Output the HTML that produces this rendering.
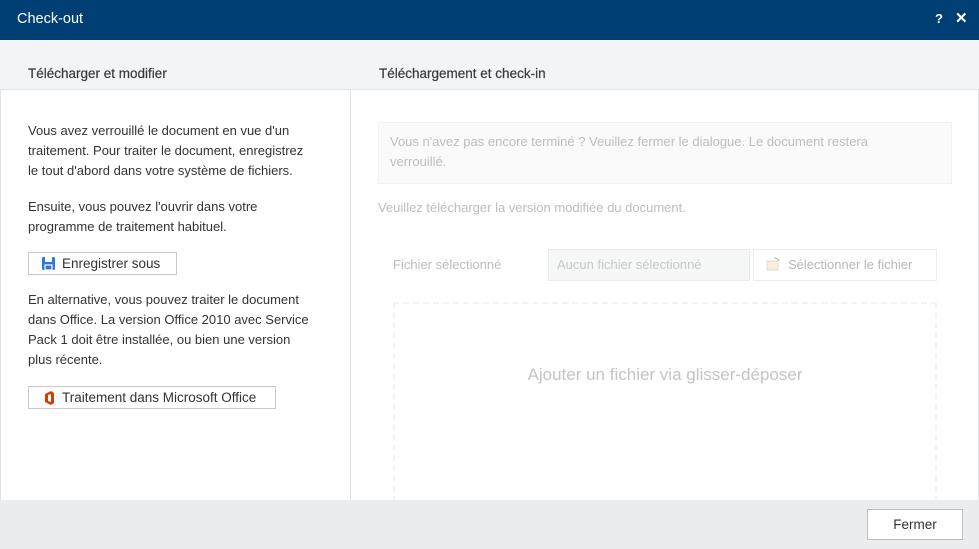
<!DOCTYPE html>
<html><head><meta charset="utf-8"><style>
*{box-sizing:border-box;margin:0;padding:0}
body{width:979px;height:549px;overflow:hidden;font-family:"Liberation Sans",sans-serif;font-size:13px;color:#333;background:#fff;position:relative}
.a{position:absolute}
.title{left:0;top:0;width:979px;height:40px;background:#003f73;color:#fff}
.hdr{left:0;top:40px;width:979px;height:50px;background:#f3f4f6;border-bottom:1px solid #e2e3e5}
.h{font-size:13.5px;color:#3a3a3a;top:66px;-webkit-text-stroke:0.2px #3a3a3a}
p{position:absolute;left:28px;line-height:20px;width:292px}
.btn{position:absolute;border:1px solid #c9c9c9;background:#fff;height:23px;font-size:13.5px;line-height:21px;color:#333}
.g{color:#bdbdbd}
</style></head><body>
<div class="a title"><span class="a" style="left:17px;top:11px;font-size:14.5px">Check-out</span>
<span class="a" style="left:935px;top:11px;font-weight:bold;font-size:13px">?</span>
<span class="a" style="left:955px;top:9px;font-weight:bold;font-size:15px">✕</span></div>
<div class="a hdr"></div>
<div class="a h" style="left:28px">Télécharger et modifier</div>
<div class="a h" style="left:379px">Téléchargement et check-in</div>
<div class="a" style="left:350px;top:90px;width:1px;height:410px;background:#e2e3e5"></div>
<div class="a" style="left:0;top:90px;width:1px;height:410px;background:#e2e3e5"></div>
<div class="a" style="left:978px;top:90px;width:1px;height:410px;background:#e2e3e5"></div>
<p style="top:121px;width:284px">Vous avez verrouillé le document en vue d'un traitement. Pour traiter le document, enregistrez le tout d'abord dans votre système de fichiers.</p>
<p style="top:197px;width:285px">Ensuite, vous pouvez l'ouvrir dans votre programme de traitement habituel.</p>
<div class="btn" style="left:28px;top:252px;width:149px"><svg class="a" style="left:13px;top:4px" width="13" height="13" viewBox="0 0 13 13"><rect x="0" y="0" width="13" height="13" rx="1.5" fill="#2b7bd6"/><rect x="3" y="0" width="7" height="5" fill="#fff"/><rect x="3" y="8" width="7" height="5" fill="#2b7bd6" stroke="#fff" stroke-width="1.2"/></svg><span class="a" style="left:33px;top:0">Enregistrer sous</span></div>
<p style="top:290px;width:288px">En alternative, vous pouvez traiter le document dans Office. La version Office 2010 avec Service Pack 1 doit être installée, ou bien une version plus récente.</p>
<div class="btn" style="left:28px;top:386px;width:248px"><svg class="a" style="left:15px;top:4px" width="11" height="14" viewBox="0 0 11 14"><path d="M1 3 L7 0 L10 2 L10 12 L7 14 L1 11 Z" fill="#d83b01"/><path d="M4 4 L7 3 L7 11 L4 10 Z" fill="#fff"/></svg><span class="a" style="left:33px;top:0">Traitement dans Microsoft Office</span></div>
<div class="a" style="left:378px;top:122px;width:574px;height:62px;background:#fafafa;border:1px solid #f2f2f2"></div>
<div class="a g" style="left:390px;top:132px;line-height:20px;width:500px">Vous n'avez pas encore terminé ? Veuillez fermer le dialogue. Le document restera verrouillé.</div>
<div class="a g" style="left:378px;top:200px">Veuillez télécharger la version modifiée du document.</div>
<div class="a g" style="left:393px;top:257px">Fichier sélectionné</div>
<div class="a g" style="left:548px;top:249px;width:202px;height:32px;background:#f6f7f7;border:1px solid #ececec;padding:7px 8px;color:#c8c8c8">Aucun fichier sélectionné</div>
<div class="a g" style="left:753px;top:249px;width:184px;height:32px;border:1px solid #ececec;padding:7px 0 0 34px;color:#b8b8b8">Sélectionner le fichier</div>
<svg class="a" style="left:766px;top:257px" width="15" height="14" viewBox="0 0 15 14"><path d="M1 4 H12 V13 H1 Z" fill="#fbeed8" stroke="#ddd"/><path d="M8 1 Q12 1 13 4" stroke="#aaa" fill="none"/></svg>
<div class="a" style="left:393px;top:302px;width:544px;height:210px;border:2px dashed #f3f3f3"></div>
<div class="a" style="left:393px;top:365px;width:544px;text-align:center;font-size:17px;color:#c4c4c4">Ajouter un fichier via glisser-déposer</div>
<div class="a" style="left:0;top:500px;width:979px;height:49px;background:#ebecee"></div>
<div class="btn" style="left:867px;top:509px;width:96px;height:31px;line-height:29px;text-align:center;border-color:#bdbdbd">Fermer</div>
</body></html>
